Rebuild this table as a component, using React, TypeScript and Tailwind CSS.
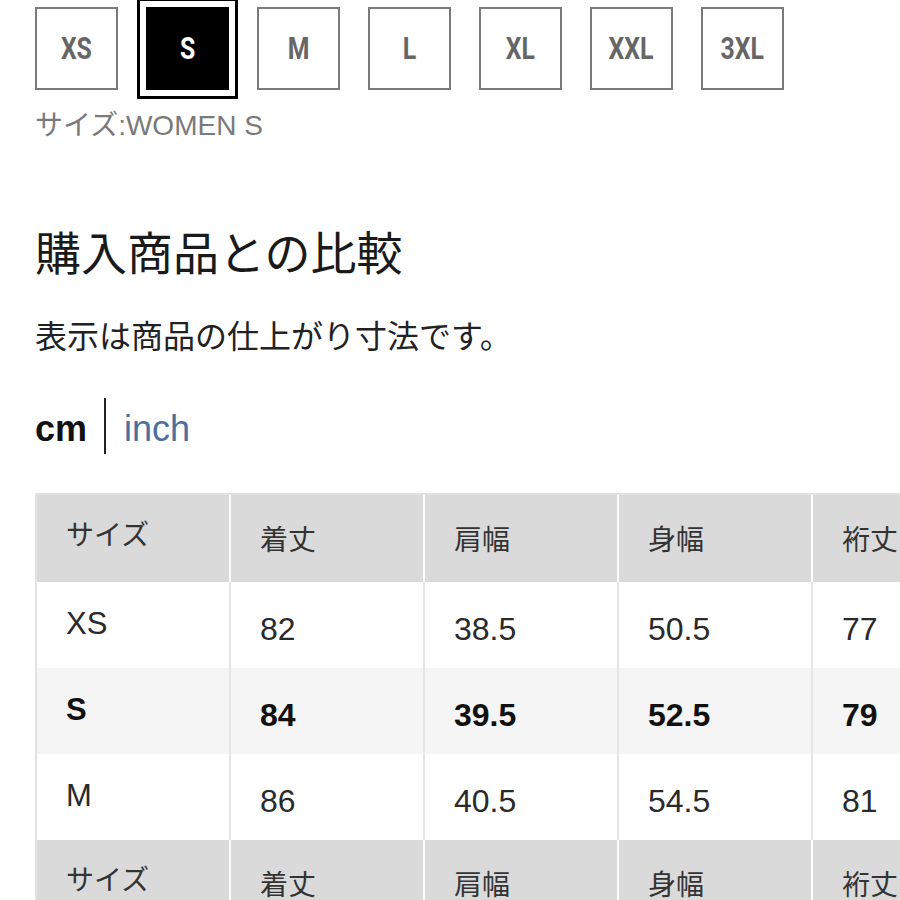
const sizes = ["XS", "S", "M", "L", "XL", "XXL", "3XL"];
const selected = "S";

const header = ["サイズ", "着丈", "肩幅", "身幅", "裄丈"];
const rows = [
  ["XS", "82", "38.5", "50.5", "77"],
  ["S", "84", "39.5", "52.5", "79"],
  ["M", "86", "40.5", "54.5", "81"],
];

const jp = "font-['Liberation_Sans','Noto_Sans_CJK_JP',sans-serif]";

function SizeBox({ label, active }: { label: string; active: boolean }) {
  return (
    <div
      className={
        active
          ? "w-[83px] h-[83px] flex items-center justify-center bg-black outline-[3px] outline-solid outline-black outline-offset-[6px]"
          : "w-[83px] h-[83px] flex items-center justify-center border-2 border-[#7a7a7a] bg-white"
      }
    >
      <span
        className={
          "font-['Roboto',sans-serif] font-bold text-[31px] leading-none scale-x-[0.8] " +
          (active ? "text-white" : "text-[#666]")
        }
      >
        {label}
      </span>
    </div>
  );
}

function HeaderRow() {
  return (
    <div className="flex h-[87px] bg-[#dadada]">
      {header.map((h, i) => (
        <div
          key={i}
          className={
            "w-[194px] shrink-0 flex items-center pl-[29px] border-r-2 border-white text-[28px] text-[#333] " +
            (i === 0 ? "pb-[6px]" : "pt-[4px]")
          }
        >
          {h}
        </div>
      ))}
    </div>
  );
}

export default function App() {
  return (
    <div className={"w-[900px] h-[900px] overflow-hidden bg-white pl-[35px] " + jp}>
      <div className="flex gap-[28px] pt-[7px]">
        {sizes.map((s) => (
          <SizeBox key={s} label={s} active={s === selected} />
        ))}
      </div>
      <div className="mt-[20px] text-[28px] leading-[32px] text-[#7a7a7a]">サイズ:WOMEN S</div>

      <h2 className="mt-[80px] text-[46px] leading-[56px] text-[#1a1a1a] font-['Noto_Sans_CJK_JP',sans-serif]">
        購入商品との比較
      </h2>
      <p className="mt-[36px] text-[32px] leading-[40px] text-[#222] font-['Noto_Sans_CJK_JP',sans-serif]">
        表示は商品の仕上がり寸法です。
      </p>

      <div className="mt-[44px] flex items-center h-[56px]">
        <span className="text-[36px] font-bold text-[#111] pt-[6px]">cm</span>
        <span className="ml-[17px] mr-[18px] w-[2px] h-[56px] bg-[#222]" />
        <span className="text-[36px] text-[#4d6f9c] pt-[6px]">inch</span>
      </div>

      <div className="mt-[39px] border-l-2 border-t-2 border-[#e2e2e2] w-[1000px]">
        <HeaderRow />
        {rows.map((r, ri) => (
          <div key={ri} className={"flex h-[86px] " + (ri === 1 ? "bg-[#f5f5f5]" : "bg-white")}>
            {r.map((c, ci) => (
              <div
                key={ci}
                className={
                  "w-[194px] shrink-0 flex items-center pl-[29px] border-r-2 border-[#e6e6e6] " +
                  (ci === 0 ? "text-[31px] pb-[2px] " : "text-[32px] pt-[8px] ") +
                  (ri === 1 ? "font-bold text-[#111]" : "text-[#2a2a2a]")
                }
              >
                {c}
              </div>
            ))}
          </div>
        ))}
        <HeaderRow />
      </div>
    </div>
  );
}
